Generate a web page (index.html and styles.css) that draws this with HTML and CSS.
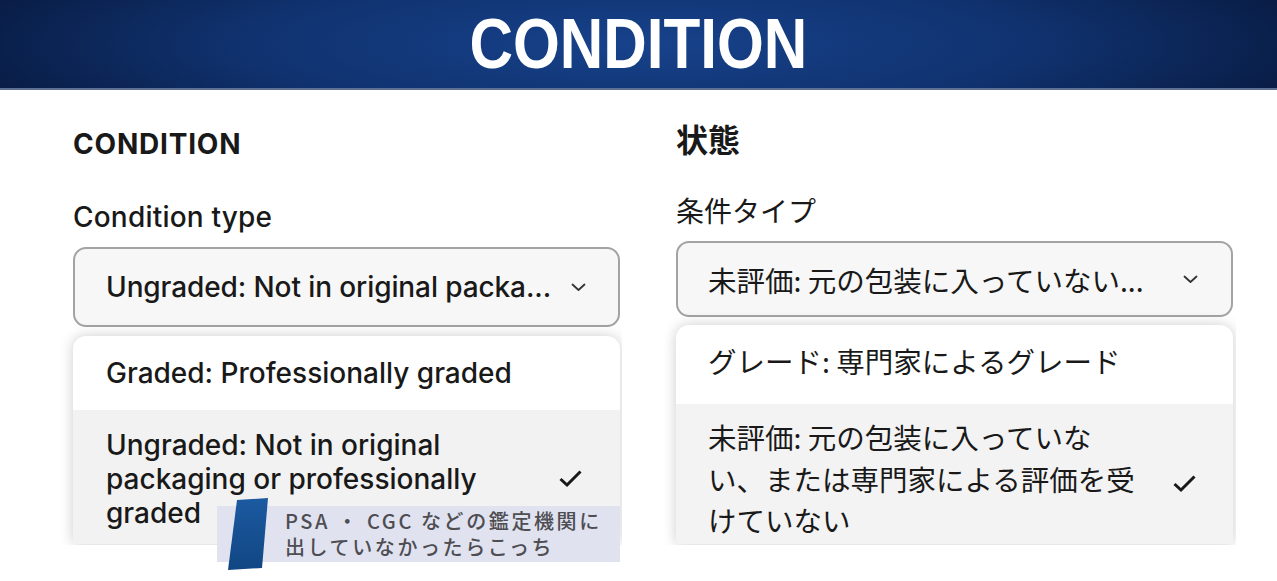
FILE: index.html
```html
<!DOCTYPE html>
<html lang="ja">
<head>
<meta charset="utf-8">
<title>CONDITION</title>
<link rel="stylesheet" href="styles.css">
</head>
<body>
<header class="banner">
  <h1 class="banner-title">CONDITION</h1>
</header>
<main class="stage">
  <div class="panels">
    <section class="panel panel-en">
      <h2 class="panel-title">CONDITION</h2>
      <div class="field-label">Condition type</div>
      <div class="select">
        <span class="select-value">Ungraded: Not in original packa...</span>
        <svg class="chevron" width="15" height="9" viewBox="0 0 15 9"><polyline points="1.5,1.5 7.5,7 13.5,1.5" fill="none" stroke="#333" stroke-width="1.8" stroke-linecap="round" stroke-linejoin="round"/></svg>
      </div>
      <ul class="menu">
        <li class="option">Graded: Professionally graded</li>
        <li class="option option-selected">
          <span class="option-text">Ungraded: Not in original<br>packaging or professionally<br>graded</span>
          <svg class="check" width="25" height="19" viewBox="0 0 25 19"><path d="M2.5 10 L9 16 L22.5 2.5" fill="none" stroke="#191919" stroke-width="3"/></svg>
        </li>
      </ul>
    </section>
    <section class="panel panel-ja">
      <h2 class="panel-title-ja">状態</h2>
      <div class="field-label-ja">条件タイプ</div>
      <div class="select select-ja">
        <span class="select-value">未評価: 元の包装に入っていない...</span>
        <svg class="chevron" width="15" height="9" viewBox="0 0 15 9"><polyline points="1.5,1.5 7.5,7 13.5,1.5" fill="none" stroke="#333" stroke-width="1.8" stroke-linecap="round" stroke-linejoin="round"/></svg>
      </div>
      <ul class="menu menu-ja">
        <li class="option">グレード: 専門家によるグレード</li>
        <li class="option option-selected">
          <span class="option-text">未評価: 元の包装に入っていな<br>い、または専門家による評価を受<br>けていない</span>
          <svg class="check" width="25" height="19" viewBox="0 0 25 19"><path d="M2.5 10 L9 16 L22.5 2.5" fill="none" stroke="#191919" stroke-width="3"/></svg>
        </li>
      </ul>
    </section>
  </div>
  <div class="callout">
    <div class="callout-bar"></div>
    <p class="callout-text">PSA ・ CGC などの鑑定機関に<br>出していなかったらこっち</p>
  </div>
</main>
</body>
</html>
```
FILE: styles.css
```css
html, body {
  margin: 0;
  padding: 0;
}
body {
  width: 1277px;
  height: 581px;
  overflow: hidden;
  background: #ffffff;
  color: #191919;
  font-family: Inter, "Noto Sans CJK JP", sans-serif;
}

/* ---------- banner ---------- */
.banner {
  height: 88px;
  border-bottom: 2px solid #5f7192;
  background: radial-gradient(ellipse 62% 160% at 50% 50%, #17428b 0%, #10326f 50%, #061536 100%);
  display: flex;
  align-items: center;
  justify-content: center;
}
.banner-title {
  margin: 0;
  color: #ffffff;
  font-family: "Liberation Sans", Arial, sans-serif;
  font-weight: 700;
  font-size: 70px;
  line-height: 70px;
  transform: scaleX(0.86);
}

/* ---------- stage ---------- */
.stage {
  position: relative;
  height: 491px;
}
.panels {
  display: flex;
  padding-left: 58px;
}
.panel {
  box-sizing: border-box;
  height: 455px;
  overflow: hidden;
}
.panel-en {
  width: 564px;
  padding: 0 2px 0 15px;
}
.panel-ja {
  width: 578px;
  margin-left: 36px;
  padding: 0 3px 0 18px;
  font-family: "Noto Sans CJK JP", sans-serif;
}

/* ---------- English panel ---------- */
.panel-title {
  margin: 37px 0 0;
  font-size: 28px;
  line-height: 34px;
  font-weight: 700;
  letter-spacing: 0.8px;
}
.field-label {
  margin-top: 39px;
  font-size: 28px;
  line-height: 34px;
  font-weight: 500;
  letter-spacing: 0.2px;
}

.select {
  box-sizing: border-box;
  margin-top: 13px;
  height: 80px;
  border: 2px solid #a3a3a3;
  border-radius: 13px;
  background: #f7f7f7;
  display: flex;
  align-items: center;
  justify-content: space-between;
  padding: 0 32px 0 31px;
  font-size: 28px;
  font-weight: 500;
  letter-spacing: -0.1px;
}
.select-value {
  white-space: nowrap;
}
.chevron {
  flex: none;
  display: block;
}

.menu {
  list-style: none;
  margin: 9px 0 0;
  padding: 0;
  background: #ffffff;
  border-radius: 13px 13px 0 0;
  box-shadow: 0 0 14px rgba(0, 0, 0, 0.2);
  font-size: 28px;
  font-weight: 500;
  letter-spacing: 0;
}
.option {
  box-sizing: border-box;
  height: 74px;
  display: flex;
  align-items: center;
  padding: 0 37px 0 33px;
  line-height: 34px;
  white-space: nowrap;
}
.option-selected {
  height: 134px;
  align-items: flex-start;
  padding-top: 18px;
  background: #f2f2f2;
  justify-content: space-between;
}
.check {
  flex: none;
  display: block;
}
.option-selected .check {
  margin-top: 41px;
}

/* ---------- Japanese panel ---------- */
.panel-title-ja {
  margin: 28px 0 0;
  font-size: 32px;
  line-height: 40px;
  font-weight: 700;
}
.field-label-ja {
  margin-top: 34px;
  font-size: 28px;
  line-height: 36px;
}
.select-ja {
  margin-top: 13px;
  height: 76px;
  padding: 0 33px 0 30px;
  font-size: 28.5px;
  font-weight: 400;
  letter-spacing: 0;
}
.menu-ja {
  margin-top: 8px;
  font-size: 28.5px;
  font-weight: 400;
  letter-spacing: 0;
}
.menu-ja .option {
  height: 79px;
  padding: 0 36px 8px 32px;
  line-height: 41.5px;
}
.menu-ja .option-selected {
  height: 140px;
  padding: 12px 36px 0 32px;
  background: #f3f3f3;
}
.menu-ja .option-selected .check {
  margin-top: 58px;
}

/* ---------- callout ---------- */
.callout {
  position: absolute;
  left: 217px;
  top: 416px;
  width: 403px;
  height: 56px;
  background: #e0e2ef;
  z-index: 2;
}
.callout-bar {
  position: absolute;
  left: 11px;
  top: -8px;
  width: 41px;
  height: 72px;
  background: linear-gradient(180deg, #1c5aa1 0%, #114683 100%);
  clip-path: polygon(9px 2px, 40px 0, 34px 70px, 0 72px);
}
.callout-text {
  margin: 0;
  padding: 2px 0 0 68px;
  font-family: "Noto Sans CJK JP", sans-serif;
  font-weight: 500;
  font-size: 20px;
  line-height: 26px;
  letter-spacing: 2.6px;
  color: #4d4d52;
  white-space: nowrap;
}
```
